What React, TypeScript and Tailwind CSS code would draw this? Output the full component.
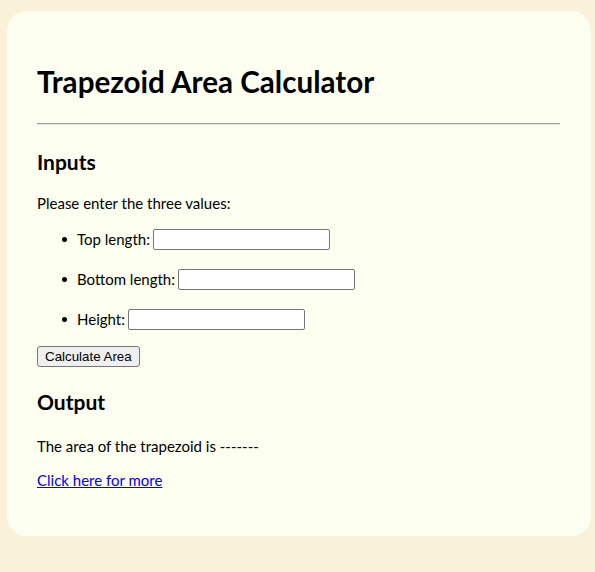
export default function App() {
  const fields = [
    { label: "Top length:", id: "top" },
    { label: "Bottom length:", id: "bottom" },
    { label: "Height:", id: "height" },
  ]

  return (
    <div className="min-h-[572px] bg-[#faf1d9] pt-[11px] pl-[7px] pb-[36px] font-['Lato',sans-serif] text-black">
      <div className="flex h-[525px] w-[584px] flex-col rounded-[20px] bg-[#fcffef] px-[30px] pt-[51px]">
        <h1 className="h-[40px] text-[29.6px] font-bold leading-[40px]">Trapezoid Area Calculator</h1>

        <hr className="mt-[21px] w-[523px] border-0 border-t border-b border-t-[#9c9c9c] border-b-[#e8e8e8]" />

        <h2 className="mt-[23px] h-[28px] text-[21px] font-bold leading-[28px]">Inputs</h2>

        <p className="mt-[17px] h-[20px] text-[15px] leading-[20px]">Please enter the three values:</p>

        <ul className="mt-[14px] flex flex-col gap-[16px] pl-[25px]">
          {fields.map((f) => (
            <li key={f.id} className="flex h-[24px] items-center text-[15px]">
              <span className="mr-[10px] h-[5px] w-[5px] rounded-full bg-black" />
              <label htmlFor={f.id} className="mr-[3px]">
                {f.label}
              </label>
              <input
                id={f.id}
                type="text"
                className="h-[21px] w-[177px] rounded-[2px] border border-[#767676] bg-white"
              />
            </li>
          ))}
        </ul>

        <div className="mt-[12px]">
          <button className="h-[21px] rounded-[3px] border border-[#767676] bg-[#efefef] px-[7px] font-['Liberation_Sans',Arial,sans-serif] text-[13.33px] leading-[19px]">
            Calculate Area
          </button>
        </div>

        <h2 className="mt-[21px] h-[28px] text-[21px] font-bold leading-[28px]">Output</h2>

        <p className="mt-[20px] h-[20px] text-[15px] leading-[20px]">The area of the trapezoid is -------</p>

        <a href="#" className="mt-[14px] h-[20px] w-fit text-[15px] leading-[20px] text-[#0000ee] underline">
          Click here for more
        </a>
      </div>
    </div>
  )
}
